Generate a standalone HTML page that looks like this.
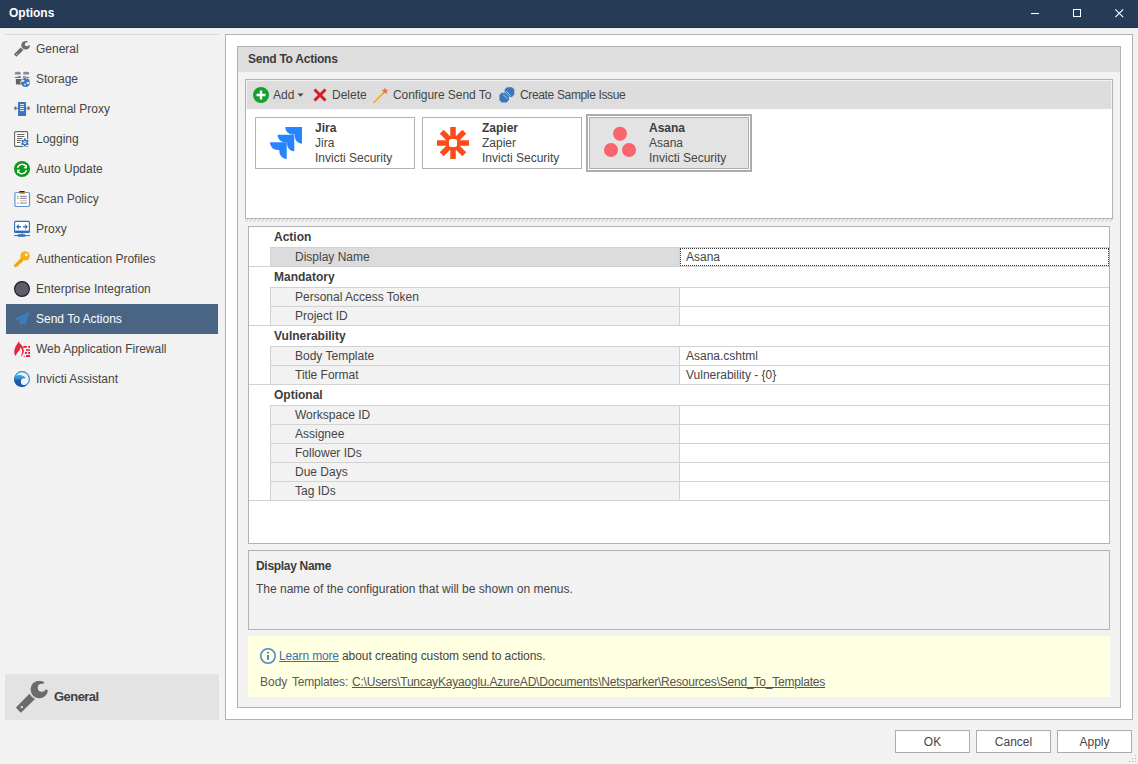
<!DOCTYPE html>
<html><head><meta charset="utf-8"><style>
*{box-sizing:border-box;margin:0;padding:0}
html,body{width:1138px;height:764px;overflow:hidden;background:#f2f2f2;font-family:"Liberation Sans",sans-serif;font-size:12px;color:#454545}
.b{color:#3c3c3c}
div,span,svg{position:absolute}
.t{white-space:pre;line-height:16px}
.b{font-weight:bold}
</style></head><body>
<div style="left:0px;top:0px;width:1138px;height:28px;background:#253b56"></div>
<div style="left:0px;top:27px;width:1138px;height:1px;background:#1f3249"></div>
<div class="t b" style="left:9px;top:5px;color:#fff">Options</div>
<svg style="left:1029px;top:8px" width="12" height="12"><path d="M2 5.5H10" stroke="#fff" stroke-width="1.1"/></svg>
<svg style="left:1071px;top:7px" width="12" height="12"><rect x="2.5" y="2.5" width="7" height="7" fill="none" stroke="#fff" stroke-width="1.05"/></svg>
<svg style="left:1113px;top:7px" width="12" height="12"><path d="M2.3 2.3L10.2 10.2M10.2 2.3L2.3 10.2" stroke="#fff" stroke-width="1.1"/></svg>
<div style="left:5px;top:34px;width:214px;height:1px;background:#d8d8d8"></div>
<div style="left:6px;top:304px;width:212px;height:30px;background:#4a6584"></div>
<svg style="left:14px;top:41px;overflow:visible" width="16" height="16" viewBox="0 0 16 16"><g transform="scale(0.5)"><path d="M13.4 12.8 L19 18.1 L4.9 31.7 L-0.1 26.7 Z" fill="#6b6b6b"/>
<path d="M14.6 14.2 L17.6 17" stroke="#f2f2f2" stroke-width="0.9"/>
<circle cx="23.3" cy="8.5" r="8.7" fill="#6b6b6b"/>
<circle cx="25.8" cy="6.7" r="4" fill="#f2f2f2"/>
<path d="M25.8 6.7 L28.4 0.2 L33 0 L33 9.6 Z" fill="#f2f2f2"/>
<circle cx="5.8" cy="26.1" r="1.2" fill="#f2f2f2"/></g></svg>
<div class="t " style="left:36px;top:41px;color:#454545">General</div>
<svg style="left:14px;top:71px;overflow:visible" width="16" height="16" viewBox="0 0 16 16"><path d="M0.6 1.6 L4.2 0.4 L6.8 1.4 L6.8 3.6 L1.2 3.6 Z M9.2 1.4 L11.8 0.4 L15.4 1.6 L14.8 3.6 L9.2 3.6 Z" fill="#8a8a8a"/>
<path d="M0.1 6.4 L6.6 5 L7 6.9 L0.6 6.9 Z M9.3 5 L15.9 6.4 L15.4 6.9 L9 6.9 Z" fill="#6e6e6e"/>
<path d="M1.9 7.9 H7.5 V13.8 L1.9 13.2 Z" fill="#5c5c5c"/>
<path d="M3.2 8.5 V12.8 M4.6 8.5 V13 M6 8.5 V13.2" stroke="#777" stroke-width="0.5"/>
<circle cx="11.5" cy="11.5" r="5.1" fill="#f2f2f2"/>
<circle cx="11.5" cy="11.5" r="4.5" fill="#3a76c0"/>
<path d="M7.6 9.6 L9.8 8.6 L10.6 10 L9 11 L7.2 11 Z M12.4 11.3 L15.2 10.8 L15.6 12.6 L13 13.2 Z M10 13 L11.6 12.6 L11.8 14.4 L10.6 14.6 Z M11.5 7.2 L13.5 7.4 L12.6 8.4 Z" fill="#e4eef8"/></svg>
<div class="t " style="left:36px;top:71px;color:#454545">Storage</div>
<svg style="left:14px;top:101px;overflow:visible" width="16" height="16" viewBox="0 0 16 16"><path d="M0.5 7.3 H15.5 M2.3 5.5 L0.5 7.3 L2.3 9.1 M13.7 5.5 L15.5 7.3 L13.7 9.1" stroke="#707070" stroke-width="1.1" fill="none"/>
<rect x="4" y="1" width="8" height="14" rx="0.6" fill="#3a76be"/>
<path d="M6 3.6 H10 M6 5.6 H10 M6 7.6 H10 M6 9.6 H10" stroke="#fff" stroke-width="0.9"/></svg>
<div class="t " style="left:36px;top:101px;color:#454545">Internal Proxy</div>
<svg style="left:14px;top:131px;overflow:visible" width="16" height="16" viewBox="0 0 16 16"><rect x="0.6" y="0.6" width="13" height="14.8" rx="1" fill="#fff" stroke="#666" stroke-width="1.1"/>
<path d="M3 3.5 H10.5 M3 5.5 H10.5 M3 7.5 H8.5 M3 9.5 H7 M3 11.5 H7" stroke="#555" stroke-width="0.9"/>
<circle cx="10.9" cy="11.4" r="4.5" fill="#fff" opacity="0.9"/><rect x="10" y="7.4" width="1.8" height="2" transform="rotate(0 10.9 11.4)" fill="#3a78c0"/><rect x="10" y="7.4" width="1.8" height="2" transform="rotate(60 10.9 11.4)" fill="#3a78c0"/><rect x="10" y="7.4" width="1.8" height="2" transform="rotate(120 10.9 11.4)" fill="#3a78c0"/><rect x="10" y="7.4" width="1.8" height="2" transform="rotate(180 10.9 11.4)" fill="#3a78c0"/><rect x="10" y="7.4" width="1.8" height="2" transform="rotate(240 10.9 11.4)" fill="#3a78c0"/><rect x="10" y="7.4" width="1.8" height="2" transform="rotate(300 10.9 11.4)" fill="#3a78c0"/><circle cx="10.9" cy="11.4" r="2.9" fill="#3a78c0"/><circle cx="10.9" cy="11.4" r="1.5" fill="#fff"/><circle cx="10.9" cy="11.4" r="0.7" fill="#3a78c0"/></svg>
<div class="t " style="left:36px;top:131px;color:#454545">Logging</div>
<svg style="left:14px;top:161px;overflow:visible" width="16" height="16" viewBox="0 0 16 16"><circle cx="8" cy="8" r="8" fill="#0c9a1e"/>
<path d="M3.6 6.8 A4.6 4.6 0 0 1 11.8 5.2" stroke="#fff" stroke-width="1.4" fill="none"/>
<path d="M13 3.5 L13 7.5 L9.5 7.3 Z" fill="#fff"/>
<path d="M12.4 9.2 A4.6 4.6 0 0 1 4.2 10.8" stroke="#fff" stroke-width="1.4" fill="none"/>
<path d="M3 12.5 L3 8.5 L6.5 8.7 Z" fill="#fff"/></svg>
<div class="t " style="left:36px;top:161px;color:#454545">Auto Update</div>
<svg style="left:14px;top:191px;overflow:visible" width="16" height="16" viewBox="0 0 16 16"><rect x="0.9" y="1.5" width="14.6" height="14" rx="1.2" fill="#fff" stroke="#5f93d2" stroke-width="1.2"/>
<rect x="5" y="0" width="6" height="3" rx="0.6" fill="#e8a920"/><rect x="5.5" y="0" width="5" height="1.4" fill="#222"/>
<path d="M3.2 5.3 H4.5 M6 5.3 H12.8 M3.2 7.3 H4.5 M6 7.3 H12.8 M3.2 12 H4.5 M6 12 H12.8" stroke="#808080" stroke-width="1"/>
<path d="M6 9.6 H12.8" stroke="#c8c8c8" stroke-width="1.2"/></svg>
<div class="t " style="left:36px;top:191px;color:#454545">Scan Policy</div>
<svg style="left:14px;top:221px;overflow:visible" width="16" height="16" viewBox="0 0 16 16"><rect x="0.6" y="0.4" width="14.8" height="11" rx="1" fill="#fff" stroke="#2f6db5" stroke-width="1.1"/>
<rect x="0.6" y="9.6" width="14.8" height="1.8" fill="#2f6db5"/>
<path d="M2.2 5.8 L4.7 3 V8.7 Z M13.8 5.8 L11.3 3 V8.7 Z M4.5 5.1 H6.9 V6.6 H4.5 Z M9.1 5.1 H11.5 V6.6 H9.1 Z" fill="#2f6db5"/>
<path d="M8 11.4 V13.5 M0 14.6 H16" stroke="#2f6db5" stroke-width="1"/>
<rect x="3.5" y="13.2" width="8.1" height="2.6" rx="1.2" fill="#2f6db5"/></svg>
<div class="t " style="left:36px;top:221px;color:#454545">Proxy</div>
<svg style="left:14px;top:251px;overflow:visible" width="16" height="16" viewBox="0 0 16 16"><path d="M7.5 7 L1 13.6 L1.2 15.6 L3.6 15.6 L4.8 14.2 L5.3 13 L6.6 12.4 L9.5 9.5" stroke="none" fill="#f2a60c"/>
<path d="M8.6 7.2 L1.5 14.6" stroke="#f2a60c" stroke-width="2.8" stroke-linecap="square"/>
<circle cx="11.1" cy="4.9" r="4.7" fill="#f6b012"/>
<circle cx="12.3" cy="3.7" r="1.5" fill="#f0f4fc"/></svg>
<div class="t " style="left:36px;top:251px;color:#454545">Authentication Profiles</div>
<svg style="left:14px;top:281px;overflow:visible" width="16" height="16" viewBox="0 0 16 16"><circle cx="8" cy="8" r="7.4" fill="#5e5c6a" stroke="#1f1e28" stroke-width="1.2"/></svg>
<div class="t " style="left:36px;top:281px;color:#454545">Enterprise Integration</div>
<svg style="left:14px;top:311px;overflow:visible" width="16" height="16" viewBox="0 0 16 16"><path d="M15.8 0.6 L0.6 7.7 L4.8 9.6 L6.4 15 L8.6 12.6 L11.6 13.8 Z" fill="#3c7bbd"/><path d="M5.4 10 L9.2 6.8" stroke="#3f6790" stroke-width="0.7"/></svg>
<div class="t " style="left:36px;top:311px;color:#fff">Send To Actions</div>
<svg style="left:14px;top:341px;overflow:visible" width="16" height="16" viewBox="0 0 16 16"><path d="M4.4 0.2 C5 1.8 6 2.5 7 3.5 C8.8 5.5 10 8 9.8 10.5 C9.7 12.8 8.2 14.6 6.5 15.5 C7.6 13.8 8.3 11.8 8.1 10 C7.9 8.5 7.3 7.2 6.5 6.3 C6.2 8 5.5 9.5 4.4 10.6 C3.3 11.8 2.3 13.4 1.8 15 C0.8 14 0.1 12.5 0.2 11 C0.2 9 1 6.5 2.2 4.5 C3.2 3 4.2 1.8 4.4 0.2 Z" fill="#e12a40"/>
<path d="M9.3 5 H12.9 V6.8 H9.3 Z M14.1 5 H16 V6.8 H14.1 Z M12 8.2 H16 V9.8 H12 Z M11 11 H12.9 V12.9 H11 Z M14.1 11 H16 V12.9 H14.1 Z M12 14.1 H16 V16 H12 Z M10.8 14.3 V16 H9.4 Z" fill="#e3223a"/></svg>
<div class="t " style="left:36px;top:341px;color:#454545">Web Application Firewall</div>
<svg style="left:14px;top:371px;overflow:visible" width="16" height="16" viewBox="0 0 16 16"><defs><linearGradient id="wv" x1="0" y1="0" x2="0" y2="1"><stop offset="0" stop-color="#2bb6ee"/><stop offset="0.3" stop-color="#2a8fd6"/><stop offset="0.45" stop-color="#2657a8"/><stop offset="1" stop-color="#2353a3"/></linearGradient></defs>
<circle cx="8" cy="8" r="7.4" fill="none" stroke="#1f8fc2" stroke-width="1.1"/>
<path d="M0.3 6.5 C1.5 4.5 4 3.6 6.5 3.9 C9 4.2 11 5.5 12.2 7.4 C11.5 7.1 10.8 7.1 10.2 7.2 A3.4 3.4 0 0 0 10.3 14 L12.8 14.6 C11.4 15.5 9.7 16 8 16 C3.6 16 0 12.4 0 8 C0 7.5 0.1 7 0.3 6.5 Z" fill="url(#wv)"/></svg>
<div class="t " style="left:36px;top:371px;color:#454545">Invicti Assistant</div>
<div style="left:5px;top:674px;width:214px;height:46px;background:#e3e3e3"></div>
<svg style="left:16px;top:681px" width="32" height="32" viewBox="0 0 32 32"><path d="M13.4 12.8 L19 18.1 L4.9 31.7 L-0.1 26.7 Z" fill="#6b6b6b"/>
<path d="M14.6 14.2 L17.6 17" stroke="#e3e3e3" stroke-width="0.9"/>
<circle cx="23.3" cy="8.5" r="8.7" fill="#6b6b6b"/>
<circle cx="25.8" cy="6.7" r="4" fill="#e3e3e3"/>
<path d="M25.8 6.7 L28.4 0.2 L33 0 L33 9.6 Z" fill="#e3e3e3"/>
<circle cx="5.8" cy="26.1" r="1.2" fill="#e3e3e3"/></svg>
<div class="t b" style="left:54px;top:689px;font-size:13px;color:#404040;letter-spacing:-0.55px">General</div>
<div style="left:225px;top:34px;width:908px;height:686px;background:#fff;border:1px solid #b2b2b2"></div>
<div style="left:237px;top:46px;width:884px;height:662px;background:#f2f2f2;border:1px solid #b2b2b2"></div>
<div style="left:238px;top:47px;width:882px;height:25px;background:#dedede"></div>
<div class="t b" style="left:248px;top:51px;letter-spacing:-0.25px">Send To Actions</div>
<div style="left:245px;top:79px;width:868px;height:140px;background:#fff;border:1px solid #b2b2b2"></div>
<div style="left:246px;top:80px;width:866px;height:29px;background:#f2f2f2"></div>
<div style="left:247px;top:81px;width:864px;height:28px;background:#dddddd"></div>
<div style="left:245px;top:219px;width:868px;height:3px;background:repeating-linear-gradient(135deg,#f2f2f2 0 1.5px,#d8d8d8 1.5px 2.83px)"></div>
<svg style="left:253px;top:87px" width="16" height="16" viewBox="0 0 16 16"><circle cx="8" cy="8" r="8" fill="#11a22e"/><path d="M8 3.5V12.5M3.5 8H12.5" stroke="#fff" stroke-width="2.4"/></svg>
<div class="t " style="left:273px;top:87px;">Add</div>
<svg style="left:297px;top:93px" width="7" height="5"><path d="M0.5 0.5H6.5L3.5 3.8Z" fill="#444"/></svg>
<svg style="left:312px;top:87px" width="16" height="16" viewBox="0 0 16 16"><path d="M2.5 2.5L13.5 13.5M13.5 2.5L2.5 13.5" stroke="#d51f26" stroke-width="3"/></svg>
<div class="t " style="left:332px;top:87px;">Delete</div>
<svg style="left:372px;top:86px" width="18" height="18" viewBox="0 0 18 18"><path d="M1.8 16.5 L11 7.3" stroke="#f7ae1a" stroke-width="1.7" stroke-linecap="round"/>
<path d="M13 1.2 L14 3.8 L16.8 3.9 L14.6 5.6 L15.4 8.3 L13 6.8 L10.7 8.3 L11.5 5.6 L9.3 3.9 L12 3.8 Z" fill="#e8754a"/></svg>
<div class="t " style="left:393px;top:87px;letter-spacing:-0.05px">Configure Send To</div>
<svg style="left:499px;top:86px" width="17" height="17" viewBox="0 0 17 17">
<path d="M2.7 6.8 L7.7 6.8 L10.0 9.1 L10.0 14.1 L7.7 16.4 L2.7 16.4 L0.4 14.1 L0.4 9.1 Z" fill="#3a77bb"/>
<path d="M8.0 1.3 L13.0 1.3 L15.3 3.6 L15.3 8.6 L13.0 10.9 L8.0 10.9 L5.7 8.6 L5.7 3.6 Z" fill="#3a77bb"/>
<path d="M5.4 5.7 L10.6 11.1" stroke="#dcdcdc" stroke-width="0.7"/>
<path d="M4.3 8.7 L8.4 12.6 M7.3 5.3 L11.5 9.4" stroke="#b9d3ee" stroke-width="0.9" stroke-linecap="round"/>
</svg>
<div class="t " style="left:520px;top:87px;letter-spacing:-0.35px">Create Sample Issue</div>
<div style="left:255px;top:117px;width:160px;height:52px;background:#fff;border:1px solid #b2b2b2"></div>
<svg style="left:270px;top:127px" width="32" height="32" viewBox="0 0 32 32">
<path d="M15.3 0 H32 V16.6 C28 16.6 24.8 13.2 24.8 9.2 V7.6 H22.8 C18.8 7.6 15.3 4.3 15.3 0 Z" fill="#2684ff"/>
<path d="M7.6 7.8 H24.3 V24.2 C20.3 24.2 17.1 21 17.1 17 V15.4 H15.1 C11.1 15.4 7.6 12 7.6 7.8 Z" fill="#2684ff"/>
<path d="M0 15.3 H16.7 V32 C12.7 32 9.4 28.6 9.4 24.6 V23 H7.4 C3.4 23 0 19.6 0 15.3 Z" fill="#2684ff"/>
</svg>
<div class="t b" style="left:315px;top:120px;">Jira</div>
<div class="t " style="left:315px;top:135px;">Jira</div>
<div class="t " style="left:315px;top:150px;">Invicti Security</div>
<div style="left:422px;top:117px;width:160px;height:52px;background:#fff;border:1px solid #b2b2b2"></div>
<svg style="left:437px;top:127px" width="32" height="32" viewBox="0 0 32 32">
<g stroke="#ff4a1c" stroke-width="5.5"><path d="M16 0V32M0 16H32M4.7 4.7L27.3 27.3M27.3 4.7L4.7 27.3"/></g>
<rect x="12" y="12" width="8" height="8" rx="2" fill="#fff"/></svg>
<div class="t b" style="left:482px;top:120px;">Zapier</div>
<div class="t " style="left:482px;top:135px;">Zapier</div>
<div class="t " style="left:482px;top:150px;">Invicti Security</div>
<div style="left:586px;top:114px;width:166px;height:58px;border:2px solid #acacac;background:#fff"></div>
<div style="left:589px;top:117px;width:160px;height:52px;background:#e3e3e3;border:1px solid #b0b0b0"></div>
<svg style="left:604px;top:126px" width="32" height="32" viewBox="0 0 32 32">
<circle cx="16" cy="7.7" r="7" fill="#f9646d"/><circle cx="7" cy="24" r="7" fill="#f9646d"/><circle cx="25" cy="24" r="7" fill="#f9646d"/></svg>
<div class="t b" style="left:649px;top:120px;">Asana</div>
<div class="t " style="left:649px;top:135px;">Asana</div>
<div class="t " style="left:649px;top:150px;">Invicti Security</div>
<div style="left:248px;top:226px;width:862px;height:318px;background:#fff;border:1px solid #b2b2b2"></div>
<div class="t b" style="left:274px;top:229px;">Action</div>
<div style="left:270px;top:247px;width:839px;height:20px;background:#dcdcdc"></div>
<div style="left:270px;top:247px;width:839px;height:1px;background:#d2d2d2"></div>
<div style="left:270px;top:247px;width:1px;height:20px;background:#d2d2d2"></div>
<div style="left:270px;top:266px;width:839px;height:1px;background:#d2d2d2"></div>
<div style="left:680px;top:248px;width:429px;height:18px;background:#fff"></div>
<div style="left:679px;top:248px;width:1px;height:18px;background:#d2d2d2"></div>
<div class="t " style="left:295px;top:249px;">Display Name</div>
<div style="left:680px;top:248px;width:429px;height:18px;background:#fff;border:1px dotted #333"></div>
<div class="t " style="left:686px;top:249px;">Asana</div>
<div style="left:249px;top:266px;width:860px;height:1px;background:#d2d2d2"></div>
<div class="t b" style="left:274px;top:269px;">Mandatory</div>
<div style="left:270px;top:287px;width:839px;height:20px;background:#f2f2f2"></div>
<div style="left:270px;top:287px;width:839px;height:1px;background:#d2d2d2"></div>
<div style="left:270px;top:287px;width:1px;height:20px;background:#d2d2d2"></div>
<div style="left:270px;top:306px;width:839px;height:1px;background:#d2d2d2"></div>
<div style="left:680px;top:288px;width:429px;height:18px;background:#fff"></div>
<div style="left:679px;top:288px;width:1px;height:18px;background:#d2d2d2"></div>
<div class="t " style="left:295px;top:289px;">Personal Access Token</div>
<div style="left:270px;top:306px;width:839px;height:20px;background:#f2f2f2"></div>
<div style="left:270px;top:306px;width:839px;height:1px;background:#d2d2d2"></div>
<div style="left:270px;top:306px;width:1px;height:20px;background:#d2d2d2"></div>
<div style="left:270px;top:325px;width:839px;height:1px;background:#d2d2d2"></div>
<div style="left:680px;top:307px;width:429px;height:18px;background:#fff"></div>
<div style="left:679px;top:307px;width:1px;height:18px;background:#d2d2d2"></div>
<div class="t " style="left:295px;top:308px;">Project ID</div>
<div style="left:249px;top:325px;width:860px;height:1px;background:#d2d2d2"></div>
<div class="t b" style="left:274px;top:328px;">Vulnerability</div>
<div style="left:270px;top:346px;width:839px;height:20px;background:#f2f2f2"></div>
<div style="left:270px;top:346px;width:839px;height:1px;background:#d2d2d2"></div>
<div style="left:270px;top:346px;width:1px;height:20px;background:#d2d2d2"></div>
<div style="left:270px;top:365px;width:839px;height:1px;background:#d2d2d2"></div>
<div style="left:680px;top:347px;width:429px;height:18px;background:#fff"></div>
<div style="left:679px;top:347px;width:1px;height:18px;background:#d2d2d2"></div>
<div class="t " style="left:295px;top:348px;">Body Template</div>
<div class="t " style="left:686px;top:348px;">Asana.cshtml</div>
<div style="left:270px;top:365px;width:839px;height:20px;background:#f2f2f2"></div>
<div style="left:270px;top:365px;width:839px;height:1px;background:#d2d2d2"></div>
<div style="left:270px;top:365px;width:1px;height:20px;background:#d2d2d2"></div>
<div style="left:270px;top:384px;width:839px;height:1px;background:#d2d2d2"></div>
<div style="left:680px;top:366px;width:429px;height:18px;background:#fff"></div>
<div style="left:679px;top:366px;width:1px;height:18px;background:#d2d2d2"></div>
<div class="t " style="left:295px;top:367px;">Title Format</div>
<div class="t " style="left:686px;top:367px;">Vulnerability - {0}</div>
<div style="left:249px;top:384px;width:860px;height:1px;background:#d2d2d2"></div>
<div class="t b" style="left:274px;top:387px;">Optional</div>
<div style="left:270px;top:405px;width:839px;height:20px;background:#f2f2f2"></div>
<div style="left:270px;top:405px;width:839px;height:1px;background:#d2d2d2"></div>
<div style="left:270px;top:405px;width:1px;height:20px;background:#d2d2d2"></div>
<div style="left:270px;top:424px;width:839px;height:1px;background:#d2d2d2"></div>
<div style="left:680px;top:406px;width:429px;height:18px;background:#fff"></div>
<div style="left:679px;top:406px;width:1px;height:18px;background:#d2d2d2"></div>
<div class="t " style="left:295px;top:407px;">Workspace ID</div>
<div style="left:270px;top:424px;width:839px;height:20px;background:#f2f2f2"></div>
<div style="left:270px;top:424px;width:839px;height:1px;background:#d2d2d2"></div>
<div style="left:270px;top:424px;width:1px;height:20px;background:#d2d2d2"></div>
<div style="left:270px;top:443px;width:839px;height:1px;background:#d2d2d2"></div>
<div style="left:680px;top:425px;width:429px;height:18px;background:#fff"></div>
<div style="left:679px;top:425px;width:1px;height:18px;background:#d2d2d2"></div>
<div class="t " style="left:295px;top:426px;">Assignee</div>
<div style="left:270px;top:443px;width:839px;height:20px;background:#f2f2f2"></div>
<div style="left:270px;top:443px;width:839px;height:1px;background:#d2d2d2"></div>
<div style="left:270px;top:443px;width:1px;height:20px;background:#d2d2d2"></div>
<div style="left:270px;top:462px;width:839px;height:1px;background:#d2d2d2"></div>
<div style="left:680px;top:444px;width:429px;height:18px;background:#fff"></div>
<div style="left:679px;top:444px;width:1px;height:18px;background:#d2d2d2"></div>
<div class="t " style="left:295px;top:445px;">Follower IDs</div>
<div style="left:270px;top:462px;width:839px;height:20px;background:#f2f2f2"></div>
<div style="left:270px;top:462px;width:839px;height:1px;background:#d2d2d2"></div>
<div style="left:270px;top:462px;width:1px;height:20px;background:#d2d2d2"></div>
<div style="left:270px;top:481px;width:839px;height:1px;background:#d2d2d2"></div>
<div style="left:680px;top:463px;width:429px;height:18px;background:#fff"></div>
<div style="left:679px;top:463px;width:1px;height:18px;background:#d2d2d2"></div>
<div class="t " style="left:295px;top:464px;">Due Days</div>
<div style="left:270px;top:481px;width:839px;height:20px;background:#f2f2f2"></div>
<div style="left:270px;top:481px;width:839px;height:1px;background:#d2d2d2"></div>
<div style="left:270px;top:481px;width:1px;height:20px;background:#d2d2d2"></div>
<div style="left:270px;top:500px;width:839px;height:1px;background:#d2d2d2"></div>
<div style="left:680px;top:482px;width:429px;height:18px;background:#fff"></div>
<div style="left:679px;top:482px;width:1px;height:18px;background:#d2d2d2"></div>
<div class="t " style="left:295px;top:483px;">Tag IDs</div>
<div style="left:249px;top:500px;width:860px;height:1px;background:#d2d2d2"></div>
<div style="left:248px;top:550px;width:862px;height:80px;background:#f2f2f2;border:1px solid #b2b2b2"></div>
<div class="t b" style="left:256px;top:558px;letter-spacing:-0.3px">Display Name</div>
<div class="t " style="left:256px;top:581px;">The name of the configuration that will be shown on menus.</div>
<div style="left:248px;top:636px;width:862px;height:61px;background:#ffffe1"></div>
<svg style="left:260px;top:648px" width="16" height="16" viewBox="0 0 16 16"><circle cx="8" cy="8" r="7.25" fill="none" stroke="#4b86c9" stroke-width="1.5"/><rect x="7" y="7" width="2" height="4.8" fill="#4b86c9"/><rect x="7" y="3.9" width="2" height="1.6" fill="#4b86c9"/></svg>
<div class="t " style="left:279px;top:648px;color:#3a6fb8;text-decoration:underline;letter-spacing:-0.15px">Learn more</div>
<div class="t " style="left:342px;top:648px;letter-spacing:-0.05px">about creating custom send to actions.</div>
<div class="t " style="left:260px;top:674px;color:#5a5a5a">Body</div>
<div class="t " style="left:292px;top:674px;color:#5a5a5a;letter-spacing:-0.2px">Templates:</div>
<div class="t " style="left:352px;top:674px;color:#555;text-decoration:underline;letter-spacing:-0.2px">C:\Users\TuncayKayaoglu.AzureAD\Documents\Netsparker\Resources\Send_To_Templates</div>
<div style="left:895px;top:730px;width:75px;height:23px;background:#fff;border:1px solid #adadad"></div>
<div class="t" style="left:895px;top:734px;width:75px;text-align:center">OK</div>
<div style="left:976px;top:730px;width:75px;height:23px;background:#fff;border:1px solid #adadad"></div>
<div class="t" style="left:976px;top:734px;width:75px;text-align:center">Cancel</div>
<div style="left:1057px;top:730px;width:75px;height:23px;background:#fff;border:1px solid #adadad"></div>
<div class="t" style="left:1057px;top:734px;width:75px;text-align:center">Apply</div>
<svg style="left:1128px;top:754px" width="10" height="10"><g fill="#b0b0b0"><rect x="7" y="1" width="1" height="1"/><rect x="4" y="4" width="1" height="1"/><rect x="7" y="4" width="1" height="1"/><rect x="1" y="7" width="1" height="1"/><rect x="4" y="7" width="1" height="1"/><rect x="7" y="7" width="1" height="1"/></g></svg>
</body></html>
